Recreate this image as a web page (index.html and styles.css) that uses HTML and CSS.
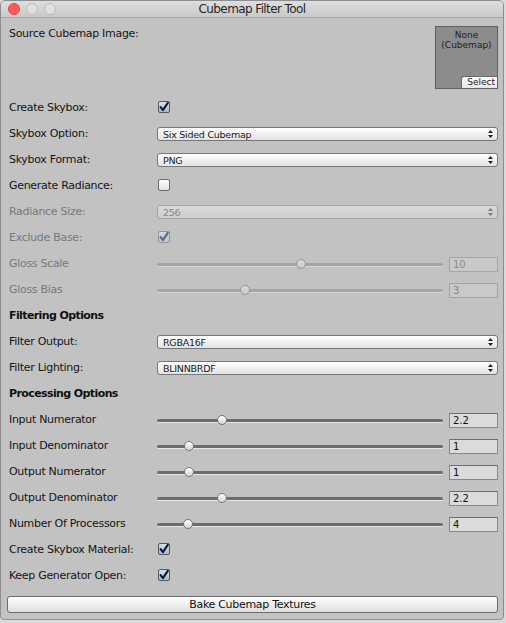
FILE: index.html
```html
<!DOCTYPE html>
<html>
<head>
<meta charset="utf-8">
<title>Cubemap Filter Tool</title>
<link rel="stylesheet" href="styles.css">
</head>
<body>
<div class="window">
  <div class="titlebar">
    <div class="lights">
      <span class="light red"></span>
      <span class="light"></span>
      <span class="light"></span>
    </div>
    <div class="title">Cubemap Filter Tool</div>
  </div>
  <div class="content">
    <div class="row source">
      <div class="label">Source Cubemap Image:</div>
      <div class="objfield">
        <div class="objtext">None<br>(Cubemap)</div>
        <div class="selectbtn">Select</div>
      </div>
    </div>

    <div class="row">
      <div class="label">Create Skybox:</div>
      <div class="check on"><svg viewBox="0 0 12 12" width="12" height="12"><path d="M2.6 6.2 L4.9 9.2 L9.8 1.8" fill="none" stroke="#0c1a33" stroke-width="2.1" stroke-linecap="round" stroke-linejoin="round"/></svg></div>
    </div>

    <div class="row">
      <div class="label">Skybox Option:</div>
      <div class="dropdown"><span>Six Sided Cubemap</span><svg class="arrows" viewBox="0 0 5 8" width="5" height="8"><path d="M2.5 0 L5 3 L0 3 Z M0 5 L5 5 L2.5 8 Z" fill="#222"/></svg></div>
    </div>

    <div class="row">
      <div class="label">Skybox Format:</div>
      <div class="dropdown"><span>PNG</span><svg class="arrows" viewBox="0 0 5 8" width="5" height="8"><path d="M2.5 0 L5 3 L0 3 Z M0 5 L5 5 L2.5 8 Z" fill="#222"/></svg></div>
    </div>

    <div class="row">
      <div class="label">Generate Radiance:</div>
      <div class="check"></div>
    </div>

    <div class="row disabled">
      <div class="label">Radiance Size:</div>
      <div class="dropdown"><span>256</span><svg class="arrows" viewBox="0 0 5 8" width="5" height="8"><path d="M2.5 0 L5 3 L0 3 Z M0 5 L5 5 L2.5 8 Z" fill="#7a7a7a"/></svg></div>
    </div>

    <div class="row disabled">
      <div class="label">Exclude Base:</div>
      <div class="check on"><svg viewBox="0 0 12 12" width="12" height="12"><path d="M2.6 6.2 L4.9 9.2 L9.8 1.8" fill="none" stroke="#5d6878" stroke-width="2.1" stroke-linecap="round" stroke-linejoin="round"/></svg></div>
    </div>

    <div class="row disabled">
      <div class="label">Gloss Scale</div>
      <div class="slider"><div class="track"></div><div class="thumb" style="--p:0.503"></div></div>
      <div class="num">10</div>
    </div>

    <div class="row disabled">
      <div class="label">Gloss Bias</div>
      <div class="slider"><div class="track"></div><div class="thumb" style="--p:0.30"></div></div>
      <div class="num">3</div>
    </div>

    <div class="row">
      <div class="label bold">Filtering Options</div>
    </div>

    <div class="row">
      <div class="label">Filter Output:</div>
      <div class="dropdown"><span>RGBA16F</span><svg class="arrows" viewBox="0 0 5 8" width="5" height="8"><path d="M2.5 0 L5 3 L0 3 Z M0 5 L5 5 L2.5 8 Z" fill="#222"/></svg></div>
    </div>

    <div class="row">
      <div class="label">Filter Lighting:</div>
      <div class="dropdown"><span>BLINNBRDF</span><svg class="arrows" viewBox="0 0 5 8" width="5" height="8"><path d="M2.5 0 L5 3 L0 3 Z M0 5 L5 5 L2.5 8 Z" fill="#222"/></svg></div>
    </div>

    <div class="row">
      <div class="label bold">Processing Options</div>
    </div>

    <div class="row">
      <div class="label">Input Numerator</div>
      <div class="slider"><div class="track"></div><div class="thumb" style="--p:0.217"></div></div>
      <div class="num">2.2</div>
    </div>

    <div class="row">
      <div class="label">Input Denominator</div>
      <div class="slider"><div class="track"></div><div class="thumb" style="--p:0.098"></div></div>
      <div class="num">1</div>
    </div>

    <div class="row">
      <div class="label">Output Numerator</div>
      <div class="slider"><div class="track"></div><div class="thumb" style="--p:0.098"></div></div>
      <div class="num">1</div>
    </div>

    <div class="row">
      <div class="label">Output Denominator</div>
      <div class="slider"><div class="track"></div><div class="thumb" style="--p:0.217"></div></div>
      <div class="num">2.2</div>
    </div>

    <div class="row">
      <div class="label">Number Of Processors</div>
      <div class="slider"><div class="track"></div><div class="thumb" style="--p:0.094"></div></div>
      <div class="num">4</div>
    </div>

    <div class="row">
      <div class="label">Create Skybox Material:</div>
      <div class="check on"><svg viewBox="0 0 12 12" width="12" height="12"><path d="M2.6 6.2 L4.9 9.2 L9.8 1.8" fill="none" stroke="#0c1a33" stroke-width="2.1" stroke-linecap="round" stroke-linejoin="round"/></svg></div>
    </div>

    <div class="row">
      <div class="label">Keep Generator Open:</div>
      <div class="check on"><svg viewBox="0 0 12 12" width="12" height="12"><path d="M2.6 6.2 L4.9 9.2 L9.8 1.8" fill="none" stroke="#0c1a33" stroke-width="2.1" stroke-linecap="round" stroke-linejoin="round"/></svg></div>
    </div>

    <div class="bake">Bake Cubemap Textures</div>
  </div>
</div>
</body>
</html>
```

FILE: styles.css
```css
* { box-sizing: border-box; }

html, body {
  margin: 0;
  padding: 0;
  background: #d9d9d9;
}

body {
  width: 506px;
  height: 623px;
  overflow: hidden;
  font-family: "DejaVu Sans", "Liberation Sans", sans-serif;
  color: #111;
}

.window {
  width: 504px;
  height: 620px;
  background: #c2c2c2;
  border: 1px solid #8e8e8e;
  border-radius: 5px 5px 4px 4px;
  overflow: hidden;
}

.titlebar {
  height: 17px;
  background: linear-gradient(#dedede, #c9c9c9);
  border-bottom: 1px solid #a4a4a4;
  display: flex;
  align-items: center;
  position: relative;
}

.lights {
  display: flex;
  gap: 6px;
  padding-left: 7px;
}

.light {
  width: 12px;
  height: 12px;
  border-radius: 50%;
  background: #e0e0e0;
  border: 1px solid #bcbcbc;
}

.light.red {
  background: #fc5b55;
  border-color: #e0443e;
}

.title {
  position: absolute;
  left: 0;
  right: 0;
  top: 0;
  height: 16px;
  line-height: 17px;
  text-align: center;
  font-size: 12px;
  letter-spacing: -0.6px;
  color: #262626;
}

.content {
  padding: 8px 5px 0 8px;
  display: flex;
  flex-direction: column;
  gap: 10px;
}

.row {
  height: 16px;
  display: flex;
  align-items: center;
  font-size: 11px;
  letter-spacing: -0.3px;
}

.label {
  width: 148px;
  flex: none;
  white-space: nowrap;
  color: #151515;
}

.label.bold {
  font-weight: bold;
  letter-spacing: -0.6px;
  color: #111;
}

.disabled .label { color: #797979; }

.row.source {
  height: 63px;
  align-items: flex-start;
  justify-content: space-between;
}

.row.source .label {
  line-height: 16px;
}

.objfield {
  width: 63px;
  height: 63px;
  background: #8c8c8c;
  border: 1px solid #606060;
  position: relative;
  letter-spacing: 0;
}

.objtext {
  text-align: center;
  font-size: 9px;
  line-height: 10px;
  padding-top: 3px;
  color: #1c1c1c;
}

.selectbtn {
  position: absolute;
  right: 0;
  bottom: 0;
  width: 36px;
  height: 12px;
  background: linear-gradient(#ffffff, #e6e6e6);
  border-top: 1px solid #6a6a6a;
  border-left: 1px solid #6a6a6a;
  border-top-left-radius: 3px;
  font-size: 9px;
  line-height: 11px;
  text-align: right;
  padding-right: 2px;
  color: #1a1a1a;
}

.check {
  width: 12px;
  height: 12px;
  margin-left: 1px;
  border: 1px solid #6b6b6b;
  border-radius: 2px;
  background: linear-gradient(#fdfdfd, #e2e2e2);
  position: relative;
}

.check.on {
  background: linear-gradient(#d7e0ec, #a9b8cc);
  border-color: #4f5a6a;
}

.check svg {
  position: absolute;
  left: -1px;
  top: -1px;
}

.disabled .check.on {
  background: linear-gradient(#d3d8de, #bcc4ce);
  border-color: #8f969f;
}

.dropdown {
  flex: 1;
  height: 14px;
  margin-top: 2px;
  border: 1px solid #777;
  border-radius: 3px;
  background: linear-gradient(#ffffff, #e3e3e3);
  display: flex;
  align-items: center;
  justify-content: space-between;
  padding: 0 4px 0 5px;
  font-size: 9.5px;
  letter-spacing: -0.25px;
  color: #1a1a1a;
}

.disabled .dropdown {
  border-color: #a3a3a3;
  background: linear-gradient(#d9d9d9, #cdcdcd);
  color: #888;
}

.slider {
  flex: 1;
  height: 16px;
  position: relative;
  margin-right: 6px;
}

.track {
  position: absolute;
  left: 0;
  right: 0;
  top: 8px;
  height: 3px;
  border-radius: 2px;
  background: #6d6d6d;
  box-shadow: 0 1px 0 #e8e8e8;
}

.disabled .track {
  background: #a5a5a5;
  box-shadow: 0 1px 0 #d6d6d6;
}

.thumb {
  position: absolute;
  top: 4px;
  left: calc(var(--p) * (100% - 10px));
  width: 10px;
  height: 10px;
  border-radius: 50%;
  border: 1px solid #777;
  background: linear-gradient(#ffffff, #d4d4d4);
}

.disabled .thumb {
  border-color: #959595;
  background: linear-gradient(#dcdcdc, #c8c8c8);
}

.num {
  width: 49px;
  height: 15px;
  flex: none;
  margin-top: 2px;
  background: #dbdbdb;
  border: 1px solid #888;
  border-top-color: #6e6e6e;
  font-size: 10px;
  letter-spacing: 0;
  line-height: 13px;
  padding-left: 3px;
  color: #111;
}

.disabled .num {
  background: #c9c9c9;
  border-color: #a4a4a4;
  color: #8a8a8a;
}

.bake {
  margin-top: 3px;
  margin-left: -2px;
  height: 17px;
  border: 1px solid #6c6c6c;
  border-radius: 3px;
  background: linear-gradient(#ffffff, #dedede);
  font-size: 11px;
  letter-spacing: -0.3px;
  line-height: 15px;
  text-align: center;
  color: #111;
}
```
